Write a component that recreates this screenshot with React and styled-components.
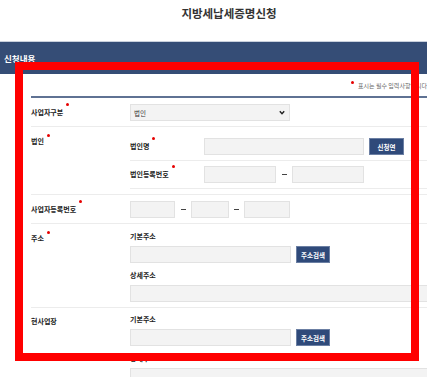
import React from 'react'
import styled, { createGlobalStyle } from 'styled-components'

const GlobalStyle = createGlobalStyle`
	html, body {
		margin: 0;
		padding: 0;
		overflow: hidden;
		background: #fff;
	}
	body {
		font-family: "Noto Sans CJK KR", "Noto Sans", sans-serif;
		color: #333;
	}
	* {
		box-sizing: border-box;
	}
`

const Page = styled.div`
	position: relative;
	width: 458px;
`

const Title = styled.h1`
	margin: 0;
	height: 41px;
	padding-top: 4px;
	text-align: center;
	font-size: 11.5px;
	line-height: 18px;
	font-weight: 700;
	color: #333;
`

const SectionBar = styled.div`
	display: flex;
	align-items: center;
	height: 33px;
	padding-left: 4px;
	background: #354d76;
	border-top: 1px solid #c9d0dc;
	color: #fff;
	font-size: 8.5px;
	font-weight: 700;
`

const Note = styled.div`
	display: flex;
	justify-content: flex-end;
	align-items: center;
	height: 22px;
	padding-right: 31px;
	font-size: 6px;
	color: #666;
`

const NoteMark = styled.span`
	display: inline-block;
	width: 3px;
	height: 3px;
	margin-right: 4px;
	margin-top: -5px;
	border-radius: 50%;
	background: #e60000;
`

const Form = styled.div`
	margin: 0 0 0 31px;
	border-top: 2px solid #5f7293;
`

const Row = styled.div`
	display: grid;
	grid-template-columns: 99px 1fr;
	padding: ${p => p.$pad || '6px 0 5px'};
	border-bottom: 1px solid #ececec;
`

const Label = styled.div`
	font-size: 7px;
	font-weight: 700;
	color: #222;
	line-height: ${p => p.$lh || '17px'};
	padding-top: ${p => p.$top || '0px'};
	white-space: nowrap;
`

const Required = styled.span`
	display: inline-block;
	vertical-align: top;
	width: 3px;
	height: 3px;
	margin-left: 3px;
	margin-top: ${p => p.$mt || '-1px'};
	border-radius: 50%;
	background: #e60000;
`

const Field = styled.div`
	display: flex;
	align-items: center;
	gap: ${p => p.$gap || '5px'};
`

const Stack = styled.div`
	display: flex;
	flex-direction: column;
`

const SubRow = styled.div`
	display: grid;
	grid-template-columns: 74px 1fr;
	align-items: center;
	padding: ${p => p.$pad || '5px 0'};
	border-bottom: 1px solid #ececec;
`

const SubLabel = styled.div`
	font-size: 7px;
	font-weight: 700;
	color: #222;
	line-height: 12px;
	margin-top: ${p => p.$mt || '0px'};
	margin-bottom: 4px;
`

const Input = styled.div`
	width: ${p => p.$w}px;
	height: 17px;
	flex: none;
	background: #f3f3f3;
	border: 1px solid #e2e2e2;
`

const Select = styled.div`
	display: flex;
	align-items: center;
	justify-content: space-between;
	width: 160px;
	height: 17px;
	padding: 0 4px 0 3px;
	background: #f3f3f3;
	border: 1px solid #e2e2e2;
	font-size: 6.5px;
	color: #333;
`

const Button = styled.div`
	display: flex;
	align-items: center;
	justify-content: center;
	width: ${p => p.$w}px;
	height: 17px;
	flex: none;
	background: #2f4a7a;
	border: 1px solid #6b7fa3;
	color: #fff;
	font-size: 6.5px;
	font-weight: 700;
`

const Dash = styled.span`
	display: flex;
	justify-content: center;
	width: ${p => p.$w || 16}px;
	flex: none;

	&::before {
		content: '';
		width: 5px;
		height: 1.5px;
		background: #444;
	}
`

const Highlight = styled.div`
	position: absolute;
	left: 15px;
	top: 62px;
	width: 404px;
	height: 299px;
	border: 8px solid #ff0000;
	pointer-events: none;
`

const Chevron = () => (
	<svg width="6" height="5" viewBox="0 0 6 5">
		<polyline points="0.8,1.2 3,3.6 5.2,1.2" fill="none" stroke="#222" strokeWidth="1.4" />
	</svg>
)

const App = () => (
	<Page>
		<GlobalStyle />
		<Title>지방세납세증명신청</Title>
		<SectionBar>신청내용</SectionBar>
		<Note>
			<NoteMark />
			표시는 필수 입력사항입니다
		</Note>
		<Form>
			<Row>
				<Label>
					사업자구분<Required />
				</Label>
				<Select>
					법인
					<Chevron />
				</Select>
			</Row>
			<Row $pad="8px 0 5px">
				<Label $lh="12px">
					법인<Required $mt="-1px" />
				</Label>
				<Stack>
					<SubRow $pad="3px 0 5px">
						<Label>
							법인명<Required />
						</Label>
						<Field>
							<Input $w={160} />
							<Button $w={35}>신청연</Button>
						</Field>
					</SubRow>
					<SubRow>
						<Label>
							법인등록번호<Required />
						</Label>
						<Field $gap="0px">
							<Input $w={72} />
							<Dash />
							<Input $w={72} />
						</Field>
					</SubRow>
				</Stack>
			</Row>
			<Row>
				<Label>
					사업자등록번호<Required />
				</Label>
				<Field $gap="0px">
					<Input $w={45} />
					<Dash />
					<Input $w={38} />
					<Dash $w={15} />
					<Input $w={46} />
				</Field>
			</Row>
			<Row $pad="6px 0 5px">
				<Label $lh="12px" $top="2px">
					주소<Required $mt="-1px" />
				</Label>
				<Stack>
					<SubLabel>기본주소</SubLabel>
					<Field>
						<Input $w={161} />
						<Button $w={34}>주소검색</Button>
					</Field>
					<SubLabel $mt="6px">상세주소</SubLabel>
					<Input $w={300} />
				</Stack>
			</Row>
			<Row $pad="5px 0 5px">
				<Label $lh="12px" $top="2px">
					현사업장
				</Label>
				<Stack>
					<SubLabel>기본주소</SubLabel>
					<Field>
						<Input $w={161} />
						<Button $w={34}>주소검색</Button>
					</Field>
					<SubLabel $mt="6px">상세주소</SubLabel>
					<Input $w={300} />
				</Stack>
			</Row>
		</Form>
		<Highlight />
	</Page>
)

export default App
